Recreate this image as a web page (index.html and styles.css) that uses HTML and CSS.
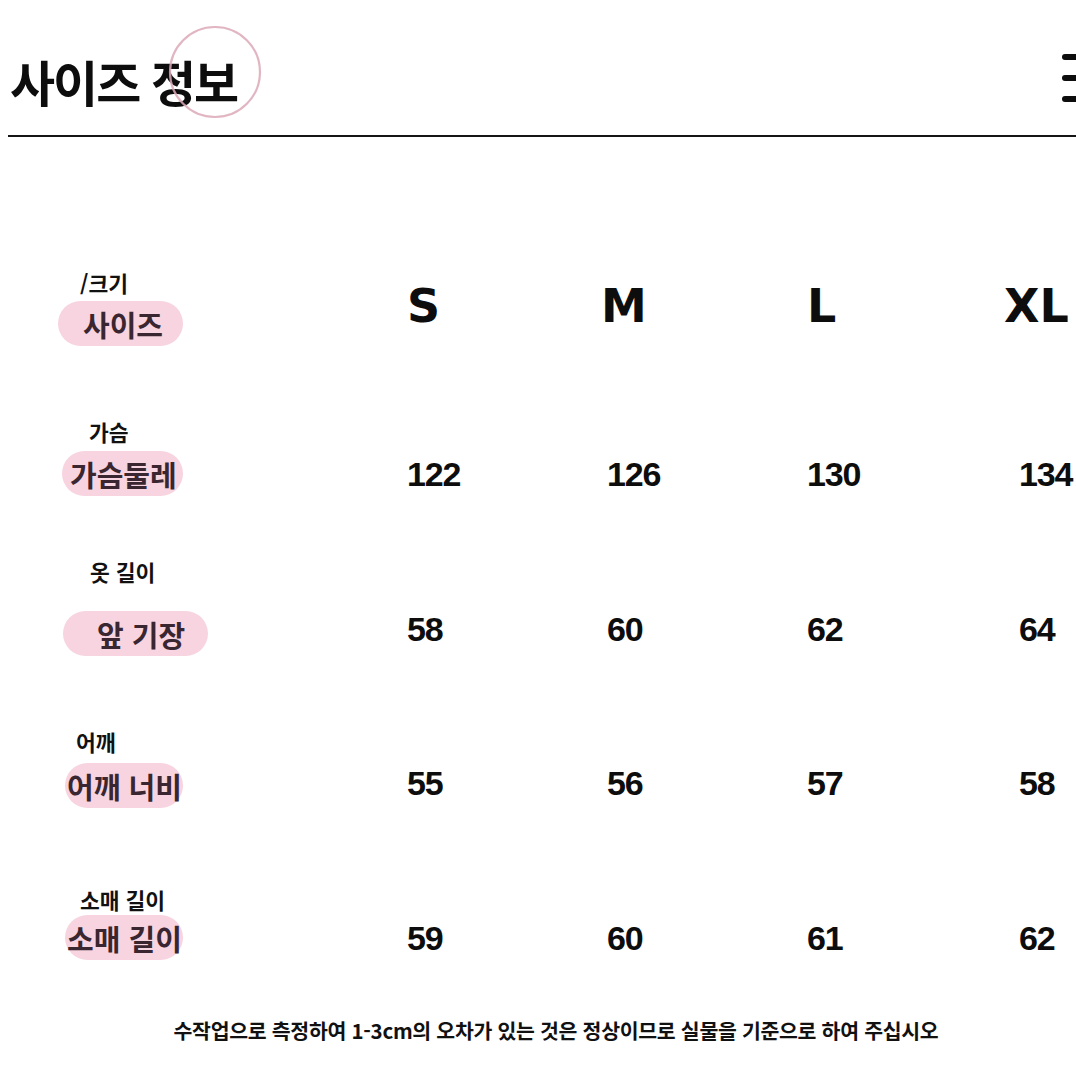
FILE: index.html
```html
<!DOCTYPE html>
<html lang="ko">
<head>
<meta charset="utf-8">
<title>사이즈 정보</title>
<link rel="stylesheet" href="styles.css">
</head>
<body>
<div class="page">
  <header class="top">
    <h1 class="title">사이즈 정보</h1>
    <svg class="circle" width="100" height="100" viewBox="0 0 100 100" aria-hidden="true">
      <circle cx="50" cy="50" r="45" fill="none" stroke="#dcaab8" stroke-width="2.2"/>
    </svg>
    <div class="menu" aria-hidden="true"><span></span><span></span><span></span></div>
  </header>

  <section class="chart">
    <div class="row r1">
      <div class="label l1"><span class="sub">/크기</span><span class="pill">사이즈</span></div>
      <div class="val head">S</div>
      <div class="val head shift-m">M</div>
      <div class="val head">L</div>
      <div class="val head shift-xl">XL</div>
    </div>
    <div class="row r2">
      <div class="label l2"><span class="sub">가슴</span><span class="pill">가슴둘레</span></div>
      <div class="val">122</div>
      <div class="val">126</div>
      <div class="val">130</div>
      <div class="val">134</div>
    </div>
    <div class="row r3">
      <div class="label l3"><span class="sub">옷 길이</span><span class="pill">앞 기장</span></div>
      <div class="val">58</div>
      <div class="val">60</div>
      <div class="val">62</div>
      <div class="val">64</div>
    </div>
    <div class="row r4">
      <div class="label l4"><span class="sub">어깨</span><span class="pill">어깨 너비</span></div>
      <div class="val">55</div>
      <div class="val">56</div>
      <div class="val">57</div>
      <div class="val">58</div>
    </div>
    <div class="row r5">
      <div class="label l5"><span class="sub">소매 길이</span><span class="pill">소매 길이</span></div>
      <div class="val">59</div>
      <div class="val">60</div>
      <div class="val">61</div>
      <div class="val">62</div>
    </div>
  </section>

  <p class="note">수작업으로 측정하여 1-3cm의 오차가 있는 것은 정상이므로 실물을 기준으로 하여 주십시오</p>
</div>
</body>
</html>
```

FILE: styles.css
```css
html, body {
  margin: 0;
  padding: 0;
  background: #ffffff;
}
body {
  width: 1076px;
  height: 1076px;
  overflow: hidden;
  font-family: "Noto Sans CJK KR", "Noto Sans", sans-serif;
  color: #111;
}
.page {
  width: 1076px;
}
.top {
  position: relative;
  margin-left: 8px;
  height: 137px;
  border-bottom: 2px solid #151515;
  box-sizing: border-box;
}
.title {
  margin: 0;
  padding: 52px 0 0 2px;
  font-size: 49px;
  line-height: 58px;
  font-weight: 700;
  letter-spacing: -2px;
  color: #0d0d0d;
}
.circle {
  position: absolute;
  left: 157px;
  top: 22px;
  opacity: 0.85;
}
.menu {
  position: absolute;
  right: -20px;
  top: 54px;
  width: 34px;
  display: flex;
  flex-direction: column;
  gap: 15px;
}
.menu span {
  display: block;
  height: 6px;
  border-radius: 3px;
  background: #0d0d0d;
}

.chart {
  padding-top: 134px;
}
.row {
  display: grid;
  grid-template-columns: 407px 200px 200px 212px 1fr;
  align-items: end;
}
.r2 { margin-top: 74px; }
.r3 { margin-top: 64px; }
.r4 { margin-top: 74px; }
.r5 { margin-top: 80px; }

.label {
  display: flex;
  flex-direction: column;
  align-items: flex-start;
}
.sub {
  font-size: 21.5px;
  line-height: 24px;
  font-weight: 700;
  color: #111;
}
.pill {
  height: 45px;
  line-height: 47px;
  box-sizing: border-box;
  border-radius: 23px;
  background: #f7d4df;
  color: #3a2630;
  font-size: 29px;
  font-weight: 700;
  letter-spacing: 0;
  white-space: nowrap;
}

.l1 .sub { margin-left: 80px; }
.l1 .pill { margin: 6px 0 0 58px; padding-left: 25px; width: 125px; }
.l2 .sub { margin-left: 89px; }
.l2 .pill { margin: 7px 0 0 62px; padding-left: 8px; width: 121px; }
.l3 .sub { margin-left: 90px; }
.l3 .pill { margin: 27px 0 0 63px; padding-left: 34px; width: 145px; }
.l4 .sub { margin-left: 76px; }
.l4 .pill { margin: 9px 0 0 65px; padding-left: 2px; width: 118px; }
.l5 .sub { margin-left: 80px; }
.l5 .pill { margin: 3px 0 0 65px; padding-left: 2px; width: 118px; }

.val {
  height: 45px;
  line-height: 47px;
  font-family: "Liberation Sans", Arial, sans-serif;
  font-weight: 700;
  font-size: 34px;
  letter-spacing: -1.2px;
  color: #0d0d0d;
}
.val.head {
  font-family: "DejaVu Sans", sans-serif;
  font-size: 46px;
  letter-spacing: 0;
  margin-bottom: 18px;
}
.val.shift-m { margin-left: -6px; }
.val.shift-xl { margin-left: -15px; }
.r3 .val { margin-bottom: 5px; }
.r4 .val { margin-bottom: 3px; }

.note {
  margin: 57px 0 0 0;
  text-align: center;
  padding-left: 36px;
  font-size: 20.5px;
  line-height: 26px;
  font-weight: 700;
  letter-spacing: -0.3px;
  color: #111;
}
```
